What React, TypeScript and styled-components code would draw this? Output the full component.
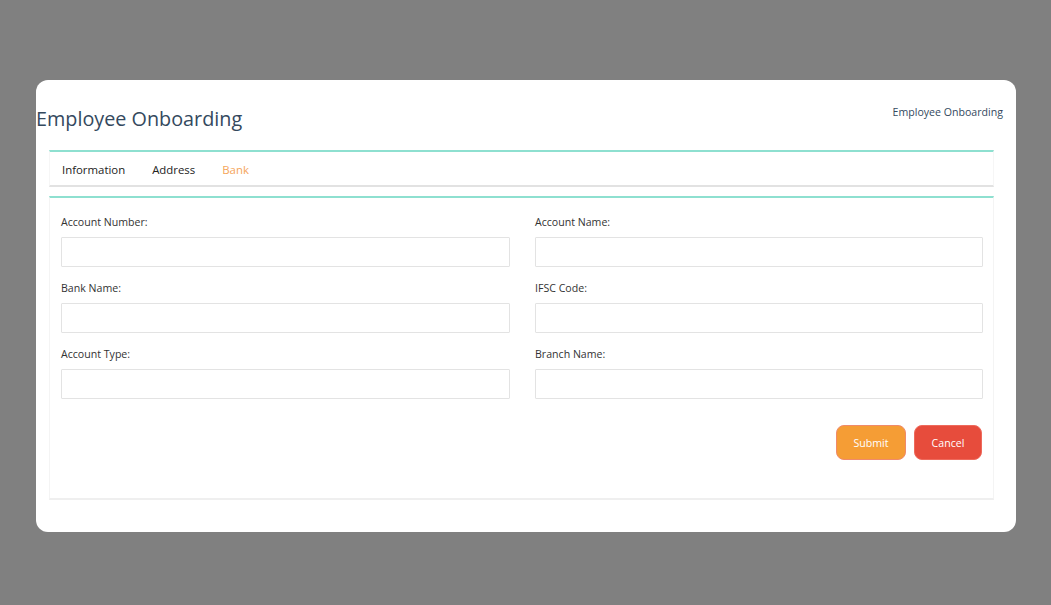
import React from "react";
import styled, { createGlobalStyle } from "styled-components";

const Global = createGlobalStyle`
  html, body { margin: 0; padding: 0; }
  body {
    background: #808080;
    font-family: "Open Sans", "Noto Sans", sans-serif;
  }
  * { box-sizing: border-box; }
`;

const Page = styled.div`
  width: 1051px;
  height: 605px;
  padding: 80px 0 0 36px;
`;

const Card = styled.div`
  width: 980px;
  height: 452px;
  background: #ffffff;
  border-radius: 12px;
  display: flex;
  flex-direction: column;
`;

const Header = styled.div`
  display: flex;
  justify-content: space-between;
  align-items: flex-start;
  height: 70px;
  padding: 0 13px 0 0;
`;

const Title = styled.h1`
  margin: 24px 0 0 0;
  font-size: 19.8px;
  font-weight: 400;
  line-height: 30px;
  color: #34495e;
`;

const Crumb = styled.div`
  margin-top: 24px;
  font-size: 10.6px;
  line-height: 16px;
  color: #34495e;
`;

const Body = styled.div`
  margin: 0 22px 0 13px;
  display: flex;
  flex-direction: column;
`;

const TabBar = styled.div`
  display: flex;
  height: 37px;
  border-top: 2px solid #8ee0d0;
  border-bottom: 2px solid #e2e2e2;
  border-left: 1px solid #f6f6f6;
  border-right: 1px solid #f6f6f6;
  padding: 3px 0 0 12px;
  align-items: center;
`;

const Tab = styled.div<{ $active?: boolean }>`
  font-size: 11.4px;
  line-height: 16px;
  color: ${(p) => (p.$active ? "#f5a55a" : "#222222")};
  margin-right: 27px;
`;

const Panel = styled.div`
  margin-top: 9px;
  border-top: 2px solid #8ee0d0;
  border-left: 1px solid #f4f4f4;
  border-right: 1px solid #f4f4f4;
  border-bottom: 2px solid #efefef;
  height: 304px;
  padding: 17px 11px 0 11px;
  display: flex;
  flex-direction: column;
`;

const Grid = styled.div`
  display: grid;
  grid-template-columns: 449px 448px;
  column-gap: 25px;
  row-gap: 14px;
`;

const Field = styled.div`
  display: flex;
  flex-direction: column;
`;

const Label = styled.label`
  font-size: 10.6px;
  line-height: 15px;
  color: #333333;
  margin-bottom: 7px;
`;

const Input = styled.input`
  height: 30px;
  width: 100%;
  border: 1px solid #e3e3e3;
  border-radius: 1px;
  background: #ffffff;
  outline: none;
  font-family: inherit;
  font-size: 12px;
  padding: 0 8px;
`;

const Actions = styled.div`
  display: flex;
  justify-content: flex-end;
  gap: 8px;
  margin-top: 26px;
`;

const Button = styled.button<{ $variant: "submit" | "cancel" }>`
  height: 35px;
  width: ${(p) => (p.$variant === "submit" ? "70px" : "68px")};
  border-radius: 8px;
  border: 1px solid ${(p) => (p.$variant === "submit" ? "#f08a6a" : "#ee6a5c")};
  background: ${(p) => (p.$variant === "submit" ? "#f59d35" : "#e74c3c")};
  color: #ffffff;
  font-family: inherit;
  font-size: 10.6px;
  cursor: pointer;
`;

const fields = [
  "Account Number:",
  "Account Name:",
  "Bank Name:",
  "IFSC Code:",
  "Account Type:",
  "Branch Name:",
];

export default function App() {
  return (
    <>
      <Global />
      <Page>
        <Card>
          <Header>
            <Title>Employee Onboarding</Title>
            <Crumb>Employee Onboarding</Crumb>
          </Header>
          <Body>
            <TabBar>
              <Tab>Information</Tab>
              <Tab>Address</Tab>
              <Tab $active>Bank</Tab>
            </TabBar>
            <Panel>
              <Grid>
                {fields.map((f) => (
                  <Field key={f}>
                    <Label>{f}</Label>
                    <Input type="text" />
                  </Field>
                ))}
              </Grid>
              <Actions>
                <Button $variant="submit">Submit</Button>
                <Button $variant="cancel">Cancel</Button>
              </Actions>
            </Panel>
          </Body>
        </Card>
      </Page>
    </>
  );
}
